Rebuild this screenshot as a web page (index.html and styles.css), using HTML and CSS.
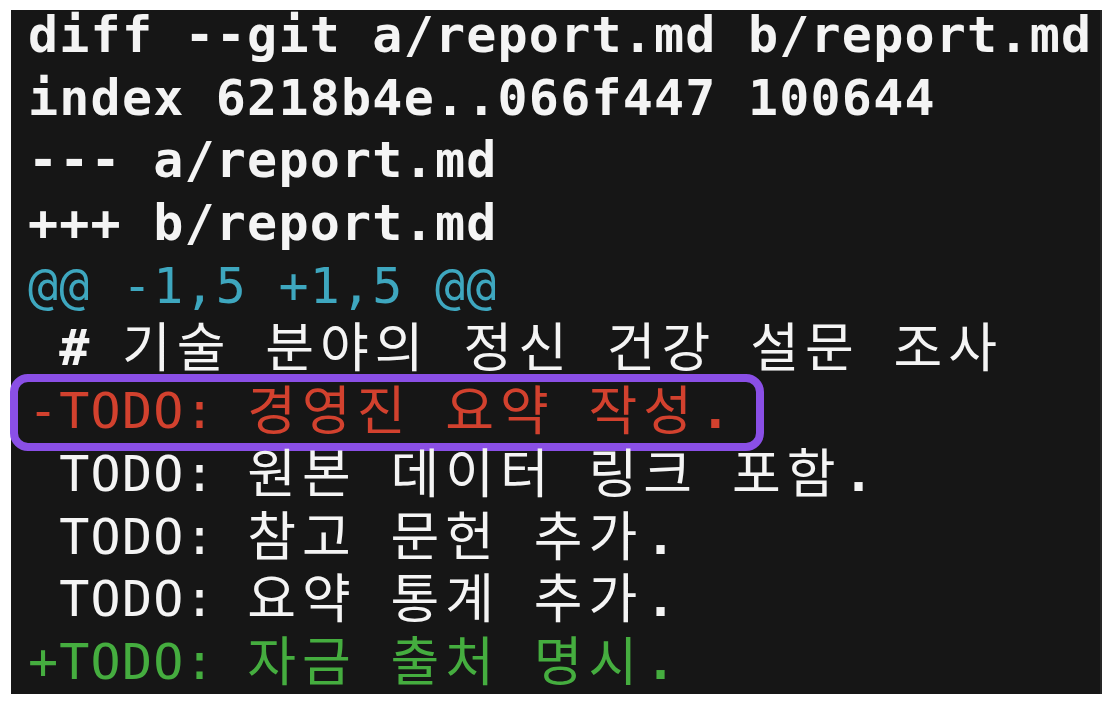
FILE: index.html
```html
<!DOCTYPE html>
<html lang="ko">
<head>
<meta charset="utf-8">
<title>git diff</title>
<link rel="stylesheet" href="styles.css">
</head>
<body>
<div class="term">
  <div class="lines">
    <div class="ln head">diff --git a/report.md b/report.md</div>
    <div class="ln head">index 6218b4e..066f447 100644</div>
    <div class="ln head">--- a/report.md</div>
    <div class="ln head">+++ b/report.md</div>
    <div class="ln hunk">@@ -1,5 +1,5 @@</div>
    <div class="ln ctx"> <span class="hash">#</span> <span class="ko">기술 분야의 정신 건강 설문 조사</span></div>
    <div class="ln del"><span class="mark"></span>-TODO: <span class="ko">경영진 요약 작성</span><span class="dot">.</span></div>
    <div class="ln ctx"> TODO: <span class="ko">원본 데이터 링크 포함</span><span class="dot">.</span></div>
    <div class="ln ctx"> TODO: <span class="ko">참고 문헌 추가</span><span class="dot">.</span></div>
    <div class="ln ctx"> TODO: <span class="ko">요약 통계 추가</span><span class="dot">.</span></div>
    <div class="ln add">+TODO: <span class="ko">자금 출처 명시</span><span class="dot">.</span></div>
  </div>
</div>
</body>
</html>
```
FILE: styles.css
```css
html, body {
  margin: 0;
  padding: 0;
  background: #ffffff;
}

.term {
  display: flow-root;
  margin: 10px 4px 8px 11px;
  height: 684px;
  background: #161616;
  border-right: 2px solid #262626;
}

.lines {
  margin-top: -6px;
  padding-left: 17px;
  font-family: "DejaVu Sans Mono", "Noto Sans CJK KR", monospace;
  font-size: 50px;
  letter-spacing: 1.2px;
  line-height: 62.7px;
  color: #f4f4f4;
}

.ln {
  white-space: pre;
  position: relative;
  height: 62.7px;
}

.head {
  font-weight: bold;
}

.hash {
  font-weight: bold;
}

.hunk {
  color: #3ea7bf;
}

.del {
  color: #d2412e;
}

.add {
  color: #45ad3f;
}

.ko {
  font-family: "Noto Sans CJK KR", sans-serif;
  font-size: 53px;
  line-height: 1;
  letter-spacing: 6px;
  word-spacing: 13px;
  vertical-align: -2px;
}

.dot {
  font-weight: bold;
  margin-left: 2px;
}

.mark {
  position: absolute;
  left: -18px;
  top: -6px;
  width: 754px;
  height: 77px;
  box-sizing: border-box;
  border: 8px solid #8a4fe6;
  border-radius: 18px;
}
```
